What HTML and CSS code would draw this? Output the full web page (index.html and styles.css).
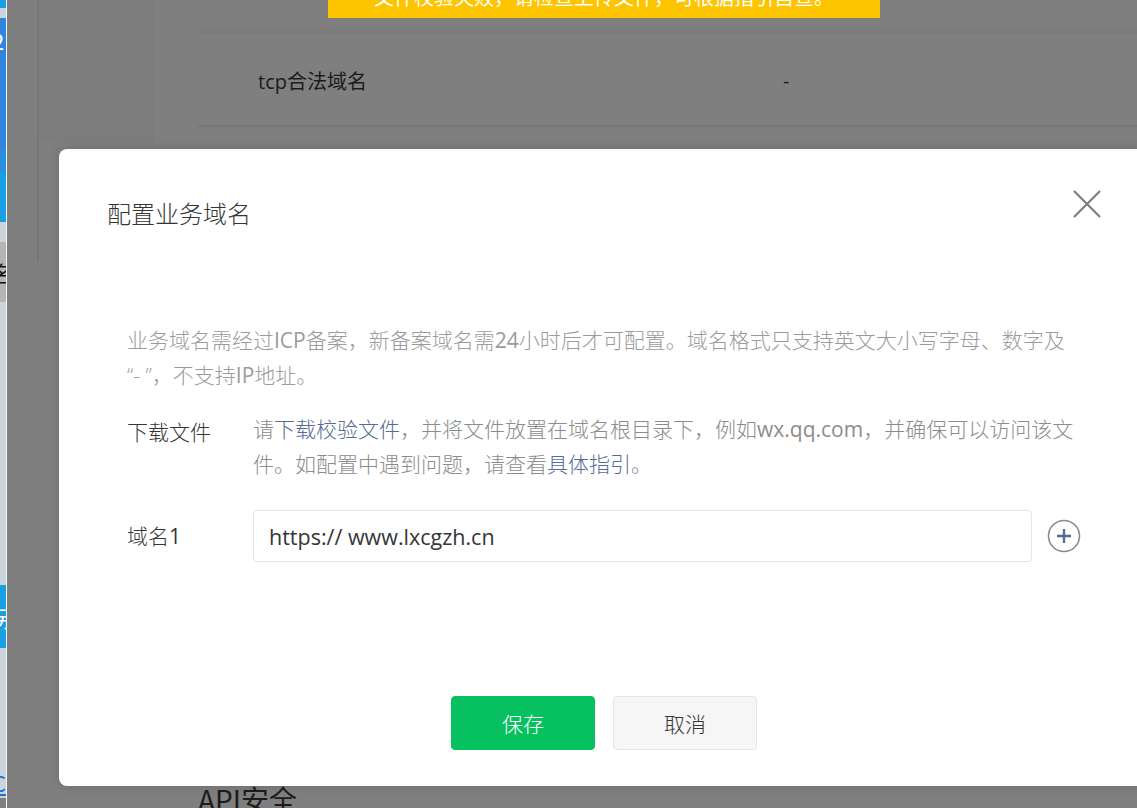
FILE: index.html
```html
<!DOCTYPE html>
<html lang="zh-CN">
<head>
<meta charset="utf-8">
<title>配置业务域名</title>
<link rel="stylesheet" href="styles.css">
</head>
<body>
<div class="screen">
  <div class="strip">
    <div class="sb sb-cyan"></div>
    <div class="sb sb-light s10"></div>
    <div class="sb sb-blue s132"><span class="sch top">2</span></div>
    <div class="sb sb-blue2 s22"></div>
    <div class="sb sb-cyan s50"></div>
    <div class="sb sb-light s20"></div>
    <div class="sb sb-grey s60"><span class="sch dark">名</span></div>
    <div class="sb sb-light s283"></div>
    <div class="sb sb-cyan s63"><span class="sch">另</span></div>
    <div class="sb sb-light s110"></div>
    <div class="sb sb-light s40"><span class="sch link">C</span></div>
  </div>
  <div class="app">
    <div class="side"></div>
    <div class="subside"></div>
    <div class="main">
      <div class="table">
        <div class="trow-top"></div>
        <div class="trow">
          <span class="tcell">tcp合法域名</span>
          <span class="tcell">-</span>
        </div>
      </div>
      <div class="section-title">API安全</div>
    </div>
  </div>

  <div class="toast"><span>文件校验失败，请检查上传文件，可根据指引自查。</span></div>

  <div class="dialog">
    <div class="dialog-head">
      <h2 class="dialog-title">配置业务域名</h2>
      <button class="close" aria-label="关闭">
        <svg viewBox="0 0 28 28" width="28" height="28"><path d="M1 1 L27 27 M27 1 L1 27" stroke="#7a7a7a" stroke-width="2" fill="none"/></svg>
      </button>
    </div>
    <div class="dialog-body">
      <p class="desc">业务域名需经过<span class="lat">ICP</span>备案，新备案域名需<span class="lat">24</span>小时后才可配置。域名格式只支持英文大小写字母、数字及<br>“- ”，不支持<span class="lat">IP</span>地址。</p>
      <div class="form-row row-file">
        <div class="label">下载文件</div>
        <div class="content">请<a class="link">下载校验文件</a>，并将文件放置在域名根目录下，例如<span class="lat">wx.qq.com</span>，并确保可以访问该文<br>件。如配置中遇到问题，请查看<a class="link">具体指引</a>。</div>
      </div>
      <div class="form-row row-domain">
        <div class="label">域名<span class="lat">1</span></div>
        <div class="input-line">
          <div class="input">https:// www.lxcgzh.cn</div>
          <svg class="add" viewBox="0 0 34 34" width="34" height="34"><circle cx="17" cy="17" r="15.5" fill="none" stroke="#8a8a8a" stroke-width="1.6"/><path d="M17 10 V24 M10 17 H24" stroke="#56698f" stroke-width="2.4" fill="none"/></svg>
        </div>
      </div>
    </div>
    <div class="dialog-foot">
      <button class="btn btn-primary">保存</button>
      <button class="btn btn-default">取消</button>
    </div>
  </div>
</div>
</body>
</html>
```
FILE: styles.css
```css
* { box-sizing: border-box; }
html, body {
  margin: 0;
  padding: 0;
  width: 1137px;
  height: 808px;
  overflow: hidden;
  font-family: "Open Sans", "Noto Sans CJK SC", sans-serif;
}
.screen {
  position: relative;
  width: 1137px;
  height: 808px;
  display: flex;
  overflow: hidden;
  background: #7f7f7f;
}

/* left strip of another window */
.strip {
  width: 7px;
  flex: none;
  border-right: 1px solid #f4f7fa;
  display: flex;
  flex-direction: column;
  overflow: hidden;
}
.sb { width: 100%; height: 8px; overflow: hidden; position: relative; }
.s10 { height: 10px; }
.s132 { height: 132px; }
.s22 { height: 22px; }
.s50 { height: 50px; }
.s20 { height: 20px; }
.s60 { height: 60px; }
.s283 { height: 283px; }
.s63 { height: 63px; }
.s110 { height: 110px; }
.s40 { height: 40px; }
.sb-cyan { background: #1a9fe3; }
.sb-light { background: #c9d4dc; }
.sb-blue { background: #2f86dc; }
.sb-blue2 { background: #2a8fde; }
.sb-grey { background: #b5b5b5; }
.sch {
  position: absolute;
  left: -8px;
  top: 50%;
  transform: translateY(-50%);
  font-size: 22px;
  line-height: 1;
  color: #ffffff;
  font-family: "Noto Sans CJK SC", sans-serif;
}
.sch.top { top: 22px; }
.sch.dark { color: #111; }
.sch.link { color: #1a6fd0; text-decoration: underline; top: 60%; }

/* dimmed app behind the modal */
.app {
  flex: 1;
  display: flex;
  background: #7f7f7f;
}
.side {
  width: 32px;
  flex: none;
  height: 262px;
  border-right: 2px solid #777777;
  background: #7f7f7f;
}
.subside {
  width: 115px;
  flex: none;
  height: 142px;
  border-right: 1px solid #7a7a7a;
  background: #7c7c7c;
}
.main {
  flex: 1;
  padding-left: 44px;
  display: flex;
  flex-direction: column;
}
.table { display: flex; flex-direction: column; }
.trow-top {
  height: 34px;
  border-top: 28px solid #7f7f7f;
  border-bottom: 1px solid #777777;
  background: #7c7c7c;
}
.trow {
  height: 93px;
  border-bottom: 2px solid #777777;
  display: grid;
  grid-template-columns: 585px 1fr;
  align-items: center;
  padding-top: 2px;
}
.tcell {
  font-size: 20px;
  color: #1c1c1c;
  font-family: "Open Sans", "Noto Sans CJK SC", sans-serif;
}
.tcell:first-child { padding-left: 60px; }
.section-title {
  margin-top: 655px;
  font-size: 28px;
  line-height: 34px;
  color: #1c1c1c;
  font-family: "Noto Sans CJK SC", sans-serif;
}

/* toast at top */
.toast {
  position: absolute;
  left: 328px;
  top: 0;
  width: 552px;
  height: 18px;
  background: #fdc400;
  overflow: hidden;
  text-align: center;
}
.toast span {
  display: block;
  font-size: 20px;
  line-height: 20px;
  color: #fff;
  margin-top: -13px;
  font-family: "Noto Sans CJK SC", sans-serif;
}

/* dialog */
.dialog {
  position: absolute;
  left: 59px;
  top: 149px;
  width: 1090px;
  height: 637px;
  background: #ffffff;
  border-radius: 8px;
  box-shadow: 0 0 12px rgba(0,0,0,0.15);
  display: flex;
  flex-direction: column;
  padding: 0 48px;
  font-weight: 300;
}
.lat { font-weight: 400; }
.dialog-head {
  position: relative;
  padding-top: 48px;
}
.dialog-title {
  margin: 0;
  font-size: 24px;
  line-height: 32px;
  font-weight: 300;
  color: #353535;
  font-family: "Noto Sans CJK SC", sans-serif;
}
.close {
  position: absolute;
  right: 0;
  top: 41px;
  width: 28px;
  height: 28px;
  padding: 0;
  border: 0;
  background: none;
  display: block;
}
.close svg { display: block; }
.dialog-body {
  padding-left: 20px;
  margin-top: 94px;
  font-size: 21px;
  line-height: 35px;
}
.desc {
  margin: 0;
  color: #9b9b9b;
  white-space: nowrap;
}
.form-row {
  display: grid;
  grid-template-columns: 126px 1fr;
}
.row-file { margin-top: 19px; }
.label { color: #353535; }
.row-file .label { padding-top: 3px; }
.content {
  color: #8c8c8c;
  white-space: nowrap;
}
.link { color: #576b95; text-decoration: none; }
.row-domain {
  margin-top: 28px;
  align-items: center;
}
.input-line {
  display: flex;
  align-items: center;
}
.input {
  width: 779px;
  height: 52px;
  border: 1px solid #e5e5e5;
  border-radius: 4px;
  padding: 0 15px;
  display: flex;
  align-items: center;
  color: #353535;
  font-size: 21.5px;
  font-weight: 400;
}
.add {
  margin-left: 15px;
  display: block;
}
.dialog-foot {
  margin-top: auto;
  padding-bottom: 36px;
  display: flex;
  justify-content: center;
  gap: 18px;
}
.btn {
  width: 144px;
  height: 54px;
  border-radius: 4px;
  font-size: 21px;
  font-weight: 300;
  font-family: "Noto Sans CJK SC", sans-serif;
  padding: 0;
}
.btn-primary {
  background: #07c160;
  color: #ffffff;
  border: 1px solid #07c160;
}
.btn-default {
  background: #f6f6f6;
  color: #353535;
  border: 1px solid #e6e6e6;
}
```
